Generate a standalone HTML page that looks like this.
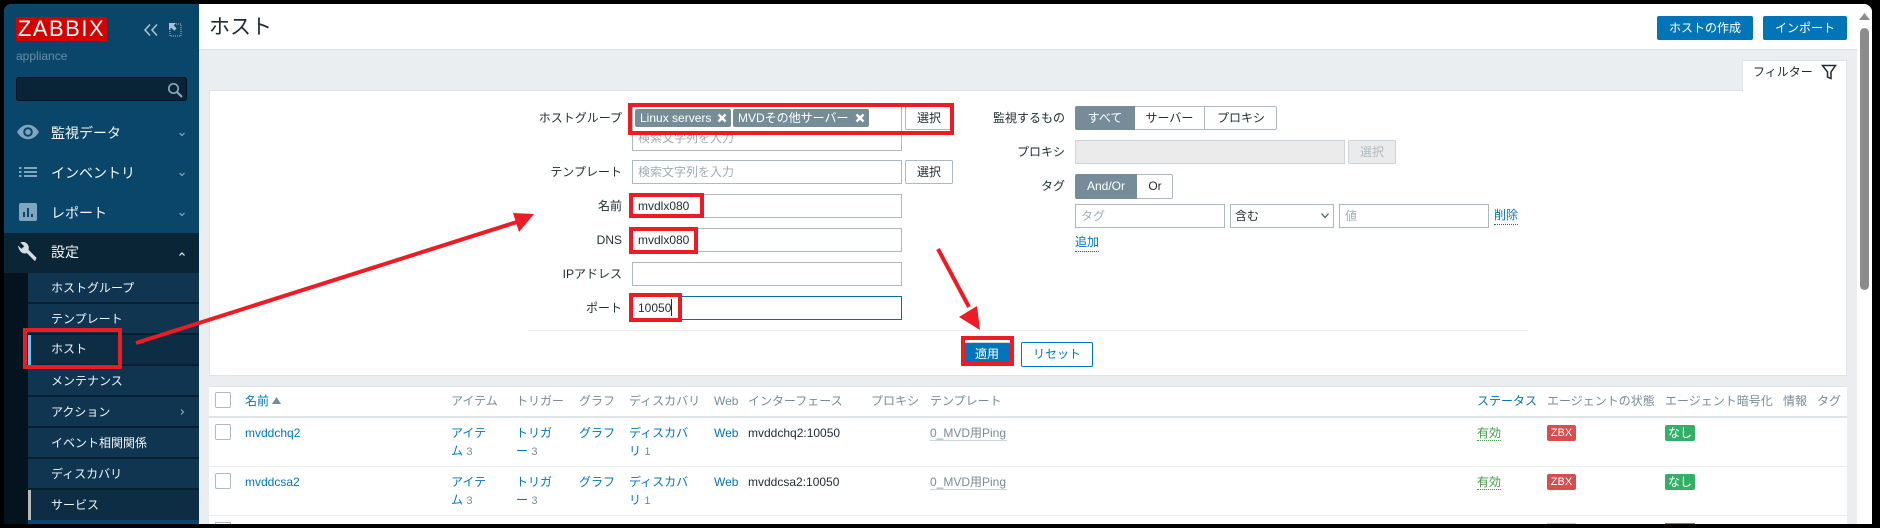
<!DOCTYPE html>
<html lang="ja"><head><meta charset="utf-8"><title>ホスト</title>
<style>
*{box-sizing:border-box}
html,body{margin:0;padding:0;width:1880px;height:528px;overflow:hidden;background:#000}
body{position:relative;font-family:"Liberation Sans","Noto Sans CJK JP",sans-serif;font-size:12px;color:#1f2c33}
.a,.t,.l{position:absolute}
.t,.l{white-space:nowrap;line-height:16px;height:16px}
.l{text-align:right;right:auto;width:120px}
.i{position:absolute;background:#fff;border:1px solid #acbbc2;height:24px}
.b{position:absolute;background:#fff;border:1px solid #acbbc2;border-radius:2px;height:24px;text-align:center;line-height:22px}
.ph{color:#9fadb5}
.m{color:#f2f6f8;font-size:14px}
.s{color:#f2f6f8;left:51px}
.sr{position:absolute;left:28px;width:171px;height:31px;background:#0f3551;border-bottom:2px solid #06202f}
.h{color:#768d99}
.k{color:#0275b8}
.n{color:#768d99;font-size:11px}
.bd{position:absolute;height:16px;border-radius:2px;color:#fff;text-align:center;line-height:16px;font-size:11px}
.ck{position:absolute;left:215px;width:16px;height:16px;border:1px solid #acbbc2;border-radius:2px;background:#fff}
.rl{position:absolute;left:209px;width:1638px;height:1px;background:#ebeef0}
</style></head><body>
<!-- frame -->
<div class="a" style="left:4px;top:4px;width:1868px;height:520px;background:#ebeef0;border-radius:8px 8px 0 0;overflow:hidden">
</div>
<!-- sidebar -->
<div class="a" style="left:4px;top:4px;width:195px;height:520px;background:#0a466a;border-radius:8px 0 0 0"></div>
<div class="a" style="left:16px;top:17px;width:91px;height:24px;background:#d40000;color:#fff;font-size:22px;line-height:24px;text-align:center;letter-spacing:1.500px;font-weight:400">ZABBIX</div>
<svg class="a" style="left:142px;top:22px" width="44" height="16" viewBox="0 0 44 16" fill="none">
<path d="M8 2.500 3 8l5 5.500M15 2.500 10 8l5 5.500" stroke="#a9c3d3" stroke-width="1.600"/>
<path d="M28 2h11v12H28z" stroke="#a9c3d3" stroke-width="1" stroke-dasharray="1 1"/>
<path d="M27 1h7l-2.400 2.400 3 3-2.300 2.300-3-3L27 8z" fill="#a9c3d3"/>
</svg>
<div class="t" style="left:16px;top:48px;color:#6a8ea6">appliance</div>
<div class="a" style="left:16px;top:77px;width:171px;height:24px;background:#082436;border:1px solid #04141f;border-radius:3px"></div>
<svg class="a" style="left:166px;top:82px" width="18" height="16" viewBox="0 0 18 16" fill="none" stroke="#8ca6b5" stroke-width="1.700"><circle cx="7.500" cy="6.500" r="4.700"/><path d="M11 10l5 5" stroke-width="2.200"/></svg>
<svg class="a" style="left:17px;top:124px" width="22" height="16" viewBox="0 0 22 16"><path d="M0 8C3 3 7 .8 11 .8S19 3 22 8c-3 5-7 7.200-11 7.200S3 13 0 8z" fill="#7ea6bf"/><circle cx="11" cy="8" r="4.800" fill="#0a466a"/><circle cx="11" cy="8" r="2.800" fill="#7ea6bf"/></svg>
<div class="t m" style="left:51px;top:125px">監視データ</div>
<svg class="a" style="left:19px;top:166px" width="18" height="12" viewBox="0 0 18 12" fill="#7ea6bf"><path d="M0 1h2.500v2H0zM0 5h2.500v2H0zM0 9h2.500v2H0zM5 1h13v2H5zM5 5h13v2H5zM5 9h13v2H5z"/></svg>
<div class="t m" style="left:51px;top:165px">インベントリ</div>
<svg class="a" style="left:19px;top:203px" width="18" height="18" viewBox="0 0 18 18"><rect width="18" height="18" rx="2" fill="#7ea6bf"/><path d="M4 9h2v5H4zM8 5h2v9H8zM12 11h2v3h-2z" fill="#0a466a"/></svg>
<div class="t m" style="left:51px;top:205px">レポート</div>
<div class="a" style="left:4px;top:233px;width:195px;height:40px;background:#0a2536"></div>
<svg class="a" style="left:18px;top:242px" width="20" height="20" viewBox="0 0 20 20"><path d="M19 17.200 10.500 8.700c.8-2.200.3-4.700-1.500-6.500C7.100.3 4.300-.1 2 1l4 4-2.800 2.800-4.100-4C0 6.100.5 8.900 2.400 10.800c1.800 1.800 4.300 2.300 6.500 1.500l8.500 8.500z" fill="#d4dde3" transform="translate(.5 -.5) scale(.95)"/></svg>
<div class="t m" style="left:51px;top:244px">設定</div>
<svg class="a" style="left:176px;top:130px" width="12" height="130" viewBox="0 0 12 130" fill="none" stroke="#8ca6b5" stroke-width="1.200"><path d="M3.500 3 6 5.500 8.500 3M3.500 43 6 45.500 8.500 43M3.500 83 6 85.500 8.500 83"/><path d="M3.500 125.500 6 123l2.500 2.500" stroke="#e8eef2"/></svg>
<!-- sub menu -->
<div class="a" style="left:4px;top:273px;width:24px;height:251px;background:#03141e"></div>
<div class="sr" style="top:273px"></div><div class="sr" style="top:304px"></div>
<div class="sr" style="top:335px;background:#0c2d44"></div><div class="sr" style="top:366px"></div>
<div class="sr" style="top:397px"></div><div class="sr" style="top:428px"></div>
<div class="sr" style="top:459px"></div><div class="sr" style="top:490px;background:#0c2d44;border-bottom:0;height:30px"></div>
<div class="a" style="left:28px;top:335px;width:3px;height:30px;background:#6cc1f5"></div>
<div class="a" style="left:28px;top:490px;width:3px;height:30px;background:#b5b9bb"></div>
<div class="t s" style="top:280px">ホストグループ</div>
<div class="t s" style="top:311px">テンプレート</div>
<div class="t s" style="top:341px">ホスト</div>
<div class="t s" style="top:373px">メンテナンス</div>
<div class="t s" style="top:404px">アクション</div>
<div class="t s" style="top:435px">イベント相関関係</div>
<div class="t s" style="top:466px">ディスカバリ</div>
<div class="t s" style="top:497px">サービス</div>
<svg class="a" style="left:178px;top:407px" width="8" height="10" viewBox="0 0 8 10" fill="none" stroke="#8ca6b5" stroke-width="1.200"><path d="M3 2.500 5.500 5 3 7.500"/></svg>

<!-- header -->
<div class="a" style="left:199px;top:4px;width:1658px;height:46px;background:#fff;border-bottom:1px solid #dfe4e7"></div>
<div class="t" style="left:209px;top:16px;font-size:21px;line-height:24px;height:24px;color:#1f2c33">ホスト</div>
<div class="b" style="left:1657px;top:16px;width:96px;background:#0275b8;border-color:#0275b8;color:#fff">ホストの作成</div>
<div class="b" style="left:1763px;top:16px;width:84px;background:#0275b8;border-color:#0275b8;color:#fff">インポート</div>
<!-- scrollbar -->
<div class="a" style="left:1857px;top:4px;width:15px;height:520px;background:#fff;border-radius:0 8px 0 0"></div>
<div class="a" style="left:1860px;top:28px;width:9px;height:262px;background:#8c8c8c;border-radius:5px"></div>
<svg class="a" style="left:1859px;top:13px" width="11" height="8" viewBox="0 0 11 8"><path d="M5.500 0 11 7H0z" fill="#8c8c8c"/></svg>
<!-- filter tab & panel -->
<div class="a" style="left:209px;top:90px;width:1638px;height:286px;background:#fff;border:1px solid #dfe4e7"></div>
<div class="a" style="left:1742px;top:60px;width:105px;height:32px;background:#fff;border:1px solid #dfe4e7;border-bottom:0"></div>
<div class="t" style="left:1753px;top:64px">フィルター</div>
<svg class="a" style="left:1821px;top:64px" width="16" height="16" viewBox="0 0 16 16" fill="none" stroke="#1f2c33" stroke-width="1.500"><path d="M1.500 1.500h13L10 8v6.500L6.500 13V8z"/></svg>

<!-- left form -->
<div class="l" style="left:502px;top:110px">ホストグループ</div>
<div class="i" style="left:632px;top:105px;width:270px;height:46px"></div>
<div class="t ph" style="left:638px;top:130px">検索文字列を入力</div>
<div class="a" style="left:635px;top:109px;width:96px;height:18px;background:#768d99;border-radius:2px;color:#fff;line-height:18px;padding-left:5px;white-space:nowrap">Linux servers</div>
<div class="a" style="left:733px;top:109px;width:136px;height:18px;background:#768d99;border-radius:2px;color:#fff;line-height:18px;padding-left:5px;white-space:nowrap">MVDその他サーバー</div>
<svg class="a" style="left:717px;top:113px" width="10" height="10" viewBox="0 0 10 10" stroke="#fff" stroke-width="2.400"><path d="M1.500 1.500l7 7M8.500 1.500l-7 7"/></svg>
<svg class="a" style="left:855px;top:113px" width="10" height="10" viewBox="0 0 10 10" stroke="#fff" stroke-width="2.400"><path d="M1.500 1.500l7 7M8.500 1.500l-7 7"/></svg>
<div class="b" style="left:905px;top:106px;width:48px">選択</div>

<div class="l" style="left:502px;top:164px">テンプレート</div>
<div class="i" style="left:632px;top:160px;width:270px"></div>
<div class="t ph" style="left:638px;top:164px">検索文字列を入力</div>
<div class="b" style="left:905px;top:160px;width:48px">選択</div>

<div class="l" style="left:502px;top:198px">名前</div>
<div class="i" style="left:632px;top:194px;width:270px"></div>
<div class="t" style="left:638px;top:198px">mvdlx080</div>
<div class="l" style="left:502px;top:232px">DNS</div>
<div class="i" style="left:632px;top:228px;width:270px"></div>
<div class="t" style="left:638px;top:232px">mvdlx080</div>
<div class="l" style="left:502px;top:266px">IPアドレス</div>
<div class="i" style="left:632px;top:262px;width:270px"></div>
<div class="l" style="left:502px;top:300px">ポート</div>
<div class="i" style="left:632px;top:296px;width:270px;border-color:#0a6ea8"></div>
<div class="t" style="left:638px;top:300px">10050</div>
<div class="a" style="left:671px;top:299px;width:1px;height:17px;background:#1f2c33"></div>

<!-- right form -->
<div class="l" style="left:945px;top:110px">監視するもの</div>
<div class="a" style="left:1075px;top:106px;width:202px;height:24px;background:#fff;border:1px solid #acbbc2;border-radius:2px"></div>
<div class="a" style="left:1075px;top:106px;width:60px;height:24px;background:#768d99;border-radius:2px 0 0 2px;color:#fff;text-align:center;line-height:24px">すべて</div>
<div class="a" style="left:1135px;top:106px;width:70px;height:24px;border-right:1px solid #acbbc2;text-align:center;line-height:24px">サーバー</div>
<div class="a" style="left:1205px;top:106px;width:72px;height:24px;text-align:center;line-height:24px">プロキシ</div>
<div class="l" style="left:945px;top:144px">プロキシ</div>
<div class="i" style="left:1075px;top:140px;width:270px;background:#ebebeb;border-color:#ccd5d9"></div>
<div class="b" style="left:1348px;top:140px;width:48px;background:#ebebeb;border-color:#ccd5d9;color:#acbbc2">選択</div>
<div class="l" style="left:945px;top:178px">タグ</div>
<div class="a" style="left:1075px;top:174px;width:98px;height:25px;background:#fff;border:1px solid #acbbc2;border-radius:2px"></div>
<div class="a" style="left:1075px;top:174px;width:62px;height:25px;background:#768d99;border-radius:2px 0 0 2px;color:#fff;text-align:center;line-height:25px">And/Or</div>
<div class="a" style="left:1137px;top:174px;width:36px;height:25px;text-align:center;line-height:25px">Or</div>
<div class="i" style="left:1075px;top:204px;width:150px"></div>
<div class="t ph" style="left:1081px;top:208px">タグ</div>
<div class="i" style="left:1230px;top:204px;width:104px"></div>
<div class="t" style="left:1235px;top:208px">含む</div>
<svg class="a" style="left:1320px;top:212px" width="10" height="8" viewBox="0 0 10 8" fill="none" stroke="#4f5f69" stroke-width="1.300"><path d="M1.500 1.500 5 5.500l3.500-4"/></svg>
<div class="i" style="left:1339px;top:204px;width:150px"></div>
<div class="t ph" style="left:1345px;top:208px">値</div>
<div class="t k" style="left:1494px;top:207px">削除</div>
<div class="a" style="left:1494px;top:224px;width:24px;border-top:1px dotted #0275b8"></div>
<div class="t k" style="left:1075px;top:234px">追加</div>
<div class="a" style="left:1075px;top:251px;width:24px;border-top:1px dotted #0275b8"></div>

<!-- filter buttons -->
<div class="a" style="left:528px;top:330px;width:1000px;height:1px;background:#ebeef0"></div>
<div class="b" style="left:964px;top:342px;width:46px;background:#0275b8;border-color:#0275b8;color:#fff;border-top-color:#c9d6de">適用</div>
<div class="b" style="left:1021px;top:342px;width:72px;border-color:#0275b8;color:#0275b8;height:25px">リセット</div>

<!-- table -->
<div class="a" style="left:209px;top:386px;width:1638px;height:138px;background:#fff;border-top:1px solid #dfe4e7"></div>
<div class="a" style="left:209px;top:416px;width:1638px;height:2px;background:#dfe4e7"></div>
<div class="rl" style="top:466px"></div><div class="rl" style="top:515px"></div>
<div class="ck" style="top:392px"></div><div class="ck" style="top:424px"></div><div class="ck" style="top:473px"></div>
<div class="a" style="left:215px;top:522px;width:16px;height:2px;border:1px solid #acbbc2;border-bottom:0;background:#fff"></div>
<div class="t k" style="left:245px;top:393px">名前</div>
<svg class="a" style="left:272px;top:397px" width="9" height="7" viewBox="0 0 9 7"><path d="M4.500 0 9 7H0z" fill="#768d99"/></svg>
<div class="t h" style="left:451px;top:393px">アイテム</div>
<div class="t h" style="left:516px;top:393px">トリガー</div>
<div class="t h" style="left:579px;top:393px">グラフ</div>
<div class="t h" style="left:629px;top:393px">ディスカバリ</div>
<div class="t h" style="left:714px;top:393px">Web</div>
<div class="t h" style="left:748px;top:393px">インターフェース</div>
<div class="t h" style="left:871px;top:393px">プロキシ</div>
<div class="t h" style="left:930px;top:393px">テンプレート</div>
<div class="t k" style="left:1477px;top:393px">ステータス</div>
<div class="t h" style="left:1547px;top:393px">エージェントの状態</div>
<div class="t h" style="left:1665px;top:393px">エージェント暗号化</div>
<div class="t h" style="left:1783px;top:393px">情報</div>
<div class="t h" style="left:1817px;top:393px">タグ</div>

<!-- row 1 -->
<div class="t k" style="left:245px;top:425px">mvddchq2</div>
<div class="t k" style="left:451px;top:425px">アイテ</div>
<div class="t k" style="left:451px;top:443px">ム <span class="n">3</span></div>
<div class="t k" style="left:516px;top:425px">トリガ</div>
<div class="t k" style="left:516px;top:443px">ー <span class="n">3</span></div>
<div class="t k" style="left:579px;top:425px">グラフ</div>
<div class="t k" style="left:629px;top:425px">ディスカバ</div>
<div class="t k" style="left:629px;top:443px">リ <span class="n">1</span></div>
<div class="t k" style="left:714px;top:425px">Web</div>
<div class="t" style="left:748px;top:425px">mvddchq2:10050</div>
<div class="t h" style="left:930px;top:425px">0_MVD用Ping</div>
<div class="a" style="left:930px;top:440px;width:77px;height:1px;background:#ccd5d9"></div>
<div class="t" style="left:1477px;top:425px;color:#429e47">有効</div>
<div class="a" style="left:1477px;top:440px;width:24px;border-top:1px dotted #429e47"></div>
<div class="bd" style="left:1547px;top:425px;width:29px;background:#d64e4e">ZBX</div>
<div class="bd" style="left:1665px;top:425px;width:30px;background:#34af67;font-size:12px">なし</div>
<!-- row 2 -->
<div class="t k" style="left:245px;top:474px">mvddcsa2</div>
<div class="t k" style="left:451px;top:474px">アイテ</div>
<div class="t k" style="left:451px;top:492px">ム <span class="n">3</span></div>
<div class="t k" style="left:516px;top:474px">トリガ</div>
<div class="t k" style="left:516px;top:492px">ー <span class="n">3</span></div>
<div class="t k" style="left:579px;top:474px">グラフ</div>
<div class="t k" style="left:629px;top:474px">ディスカバ</div>
<div class="t k" style="left:629px;top:492px">リ <span class="n">1</span></div>
<div class="t k" style="left:714px;top:474px">Web</div>
<div class="t" style="left:748px;top:474px">mvddcsa2:10050</div>
<div class="t h" style="left:930px;top:474px">0_MVD用Ping</div>
<div class="a" style="left:930px;top:489px;width:77px;height:1px;background:#ccd5d9"></div>
<div class="t" style="left:1477px;top:474px;color:#429e47">有効</div>
<div class="a" style="left:1477px;top:489px;width:24px;border-top:1px dotted #429e47"></div>
<div class="bd" style="left:1547px;top:474px;width:29px;background:#d64e4e">ZBX</div>
<div class="bd" style="left:1665px;top:474px;width:30px;background:#34af67;font-size:12px">なし</div>
<div class="a" style="left:1547px;top:523px;width:29px;height:1px;background:#c9c9c9"></div>
<div class="a" style="left:1665px;top:523px;width:30px;height:1px;background:#34af67"></div>

<!-- red annotations -->
<svg class="a" style="left:0;top:0" width="1880" height="528" viewBox="0 0 1880 528" fill="none" stroke="#ed1c24" stroke-width="4">
<rect x="630" y="105" width="322" height="28"/>
<rect x="631" y="195" width="71" height="21"/>
<rect x="631" y="229" width="65" height="23"/>
<rect x="631" y="295" width="49" height="25"/>
<rect x="963" y="338" width="49" height="26"/>
<rect x="25" y="330" width="95" height="37"/>
<path d="M136 343 520 221M938 249 969 307"/>
<path d="M534 214 513 213 519 232z" fill="#ed1c24" stroke="none"/>
<path d="M980 330 959 317 977 306z" fill="#ed1c24" stroke="none"/>
</svg>
</body></html>
